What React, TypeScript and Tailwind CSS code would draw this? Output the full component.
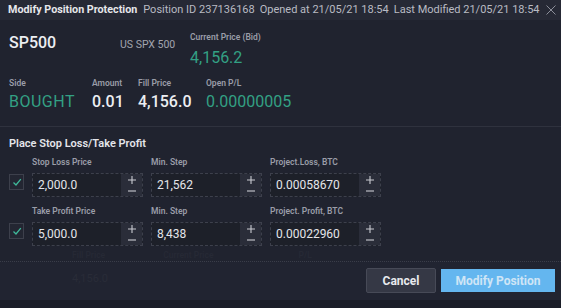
import React from 'react';

const teal = 'text-[#33a084]';

const Check: React.FC = () => (
  <div className="w-4 h-4 mt-[1px] border border-[#3d404c] bg-[#232632] flex items-center justify-center">
    <svg width="10" height="10" viewBox="0 0 10 10" fill="none">
      <path d="M1.5 5.5 L4 8 L8.8 2.2" stroke="#3fb99a" strokeWidth="1.3" />
    </svg>
  </div>
);

const Spinner: React.FC = () => (
  <div className="w-[21px] flex flex-col bg-[#2a2d39]">
    <div className="h-[11px] flex items-center justify-center">
      <svg width="8" height="8" viewBox="0 0 8 8">
        <path d="M0 4 H8 M4 0 V8" stroke="#c9cbd2" strokeWidth="1.1" />
      </svg>
    </div>
    <div className="h-[11px] flex items-center justify-center">
      <svg width="8" height="8" viewBox="0 0 8 8">
        <path d="M0 4 H8" stroke="#c9cbd2" strokeWidth="1.1" />
      </svg>
    </div>
  </div>
);

const NumberInput: React.FC<{ label: string; value: string }> = ({ label, value }) => (
  <div className="flex flex-col w-[111px]">
    <span className="text-[8.5px] font-semibold text-[#9a9da8] h-[13px] leading-[13px] mb-[4px]">{label}</span>
    <div className="flex h-[24px] border border-dashed border-[#3d404c] bg-[#1d2029]">
      <span className="flex-1 pl-[5px] text-[12px] text-[#e4e5ea] leading-[22px]">{value}</span>
      <Spinner />
    </div>
  </div>
);

const Row: React.FC<{ labels: string[]; values: string[] }> = ({ labels, values }) => (
  <div className="flex items-end gap-2">
    <div className="w-[15px] h-[24px] flex items-start">
      <Check />
    </div>
    {labels.map((l, i) => (
      <NumberInput key={l} label={l} value={values[i]} />
    ))}
  </div>
);

export default function App() {
  return (
    <div className="w-[561px] h-[308px] bg-[#20232f] flex flex-col overflow-hidden" style={{ fontFamily: 'Roboto, "Liberation Sans", sans-serif' }}>
      <div className="h-[20px] bg-[#262935] flex items-center pl-2 pr-[5px] text-[11px] text-[#b9bbc3]">
        <span className="font-bold text-[#e6e7eb] mr-[6px] text-[10.75px]">Modify Position Protection</span>
        <span className="mr-[5px]">Position ID 237136168</span>
        <span className="mr-[5px]">Opened at 21/05/21 18:54</span>
        <span>Last Modified 21/05/21 18:54</span>
        <svg className="ml-auto" width="10" height="10" viewBox="0 0 10 10">
          <path d="M0.5 0.5 L9.5 9.5 M9.5 0.5 L0.5 9.5" stroke="#8b8e99" strokeWidth="1" />
        </svg>
      </div>

      <div className="px-[9px] pt-[11px]">
        <div className="flex items-start">
          <span className="w-[111px] text-[16px] font-medium text-[#eceef2] leading-[20px] mt-[2px]">SP500</span>
          <span className="w-[70px] text-[10.5px] text-[#a2a5af] mt-[6px]">US SPX 500</span>
          <div className="flex flex-col">
            <span className="text-[8.5px] font-semibold text-[#9a9da8] leading-[12px]">Current Price (Bid)</span>
            <span className={`text-[16px] ${teal} leading-[20px] mt-[5px]`}>4,156.2</span>
          </div>
        </div>
        <div className="flex mt-[9px]">
          <div className="w-[83px] flex flex-col">
            <span className="text-[8.5px] font-semibold text-[#9a9da8] leading-[12px]">Side</span>
            <span className={`text-[16px] ${teal} leading-[20px] mt-[3px] tracking-[0.5px]`}>BOUGHT</span>
          </div>
          <div className="w-[46px] flex flex-col">
            <span className="text-[8.5px] font-semibold text-[#9a9da8] leading-[12px]">Amount</span>
            <span className="text-[16px] text-[#eceef2] leading-[20px] mt-[3px] font-medium">0.01</span>
          </div>
          <div className="w-[68px] flex flex-col">
            <span className="text-[8.5px] font-semibold text-[#9a9da8] leading-[12px]">Fill Price</span>
            <span className="text-[16px] text-[#eceef2] leading-[20px] mt-[3px] font-medium">4,156.0</span>
          </div>
          <div className="flex flex-col">
            <span className="text-[8.5px] font-semibold text-[#9a9da8] leading-[12px]">Open P/L</span>
            <span className={`text-[16px] ${teal} leading-[20px] mt-[3px]`}>0.00000005</span>
          </div>
        </div>
      </div>

      <div className="h-px bg-[#2f323e] mt-[14px]" />

      <div className="px-[9px] pt-[9px] flex flex-col">
        <span className="text-[11px] font-semibold text-[#e4e5ea] leading-[16px]">Place Stop Loss/Take Profit</span>
        <div className="flex flex-col gap-[8px] mt-[4px]">
          <Row labels={['Stop Loss Price', 'Min. Step', 'Project.Loss, BTC']} values={['2,000.0', '21,562', '0.00058670']} />
          <Row labels={['Take Profit Price', 'Min. Step', 'Project. Profit, BTC']} values={['5,000.0', '8,438', '0.00022960']} />
        </div>
      </div>

      <div className="flex text-[8.5px] text-[#262935] font-semibold mt-[3px] h-[12px] leading-[12px]">
        <span className="ml-[72px]">Fill Price</span>
        <span className="ml-[58px]">Current Price</span>
        <span className="ml-[85px]">P/L</span>
      </div>

      <div className="border-t border-dotted border-[#3a3d49] flex-1 flex items-start justify-between pr-[6px] pt-[6px] bg-[#212431]">
        <span className="ml-[72px] mt-[3px] text-[11px] text-[#292c38]">4,156.0</span>
        <div className="flex gap-[5px]">
          <button className="w-[70px] h-[25px] bg-[#353845] border border-[#474a57] rounded-[2px] text-[12px] font-bold text-[#e8e9ed]">Cancel</button>
          <button className="w-[114px] h-[23px] mt-[1px] bg-[#64b6ef] text-[12px] font-bold text-[#cfe5f6]">Modify Position</button>
        </div>
      </div>
      <div className="h-[8px] bg-[#1b1e28]" />
    </div>
  );
}
